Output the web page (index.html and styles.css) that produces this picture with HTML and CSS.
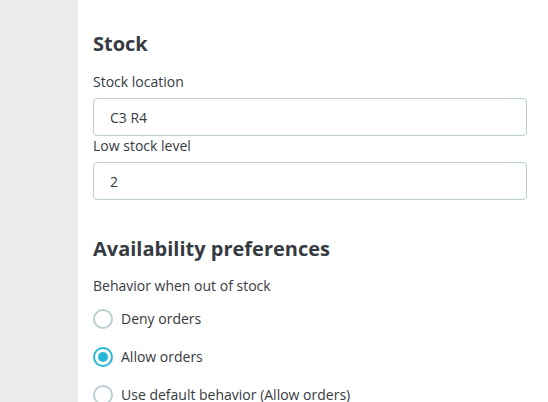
FILE: index.html
```html
<!DOCTYPE html>
<html lang="en">
<head>
<meta charset="utf-8">
<title>Stock</title>
<link rel="stylesheet" href="styles.css">
</head>
<body>
<div class="layout">
  <aside class="sidebar"></aside>
  <main class="content">
    <section class="section">
      <h2 class="heading">Stock</h2>
      <label class="field-label" for="loc">Stock location</label>
      <input class="text-input" id="loc" type="text" value="C3 R4">
      <label class="field-label" for="low">Low stock level</label>
      <input class="text-input" id="low" type="text" value="2">
    </section>
    <section class="section section-avail">
      <h2 class="heading">Availability preferences</h2>
      <div class="field-label group-label">Behavior when out of stock</div>
      <div class="radio-list">
        <label class="radio-row"><span class="radio"></span><span class="radio-text">Deny orders</span></label>
        <label class="radio-row"><span class="radio checked"></span><span class="radio-text">Allow orders</span></label>
        <label class="radio-row"><span class="radio"></span><span class="radio-text">Use default behavior (Allow orders)</span></label>
      </div>
    </section>
  </main>
</div>
</body>
</html>
```
FILE: styles.css
```css
* { box-sizing: border-box; }
html, body { margin: 0; padding: 0; background: #fff; }
body {
  font-family: "Open Sans", "Noto Sans", sans-serif;
  color: #363a41;
  font-size: 14px;
  line-height: 20px;
  overflow: hidden;
  height: 402px;
}
.layout { display: flex; height: 402px; }
.sidebar { width: 78px; flex: none; background: #eaebed; }
.content { flex: 1; padding: 32px 21px 0 15px; }
.heading {
  margin: 0 0 16px;
  font-size: 20px;
  line-height: 24px;
  font-weight: 700;
  color: #363a41;
}
.field-label {
  display: block;
  margin: 0 0 6px;
  font-size: 14px;
  line-height: 20px;
  color: #363a41;
}
.text-input {
  display: block;
  width: 100%;
  height: 38px;
  margin: 0;
  padding: 0 16px;
  border: 1px solid #bbcdd2;
  border-radius: 4px;
  font-family: inherit;
  font-size: 14px;
  color: #363a41;
  background: #fff;
  outline: none;
}
.section-avail { margin-top: 37px; }
.section-avail .heading { margin-bottom: 15px; }
.group-label { margin-bottom: 13px; }
.radio-list { display: flex; flex-direction: column; gap: 18px; }
.radio-row { display: flex; align-items: center; gap: 8px; height: 20px; }
.radio {
  width: 20px; height: 20px; flex: none;
  border: 2px solid #bbcdd2;
  border-radius: 50%;
  background: #fff;
  position: relative;
}
.radio.checked { border-color: #25b9d7; }
.radio.checked::after {
  content: "";
  position: absolute;
  left: 3px; top: 3px;
  width: 10px; height: 10px;
  border-radius: 50%;
  background: #25b9d7;
}
.radio-text { line-height: 20px; }
```
